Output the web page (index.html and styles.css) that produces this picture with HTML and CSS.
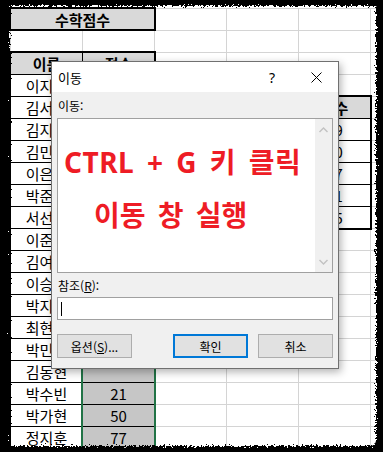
FILE: index.html
```html
<!DOCTYPE html>
<html lang="ko">
<head>
    <meta charset="UTF-8">
    <meta name="viewport" content="width=device-width, initial-scale=1.0">
    <title>이동</title>
    <link rel="stylesheet" href="styles.css">
</head>
<body>
    <div class="sheet">
        <div class="title-cell">수학점수</div>

        <div class="score-table">
            <div class="cell head">이름</div><div class="cell head">점수</div>
            <div class="cell">이지원</div><div class="cell sel"></div>
            <div class="cell">김서연</div><div class="cell sel"></div>
            <div class="cell">김지호</div><div class="cell sel"></div>
            <div class="cell">김민준</div><div class="cell sel"></div>
            <div class="cell">이은서</div><div class="cell sel"></div>
            <div class="cell">박준영</div><div class="cell sel"></div>
            <div class="cell">서선희</div><div class="cell sel"></div>
            <div class="cell">이준호</div><div class="cell sel"></div>
            <div class="cell">김여진</div><div class="cell sel"></div>
            <div class="cell">이승민</div><div class="cell sel"></div>
            <div class="cell">박지민</div><div class="cell sel"></div>
            <div class="cell">최현우</div><div class="cell sel"></div>
            <div class="cell">박민수</div><div class="cell sel"></div>
            <div class="cell">김동현</div><div class="cell sel"></div>
            <div class="cell">박수빈</div><div class="cell sel">21</div>
            <div class="cell">박가현</div><div class="cell sel">50</div>
            <div class="cell">정지훈</div><div class="cell sel">77</div>
        </div>

        <div class="side-table">
            <div class="cell head"></div><div class="cell head">점수</div>
            <div class="cell"></div><div class="cell">89</div>
            <div class="cell"></div><div class="cell">90</div>
            <div class="cell"></div><div class="cell">87</div>
            <div class="cell"></div><div class="cell">71</div>
            <div class="cell"></div><div class="cell">95</div>
        </div>

        <div class="selection"></div>
    </div>

    <div class="dialog">
        <div class="dialog-title">
            <span class="caption">이동</span>
            <span class="help">?</span>
            <span class="close">
                <svg width="11" height="11" viewBox="0 0 11 11">
                    <path d="M0.5 0.5L10.5 10.5M10.5 0.5L0.5 10.5" stroke="#000" stroke-width="1" fill="none"/>
                </svg>
            </span>
        </div>
        <div class="dialog-body">
            <div class="label">이동:</div>
            <div class="listbox">
                <div class="list-area">
                    <p class="line1">CTRL + G 키 클릭</p>
                    <p class="line2">이동 창 실행</p>
                </div>
                <div class="scrollbar">
                    <svg width="9" height="6" viewBox="0 0 9 6">
                        <path d="M0.5 5L4.5 1L8.5 5" stroke="#c2c2c2" stroke-width="1.4" fill="none"/>
                    </svg>
                    <svg width="9" height="6" viewBox="0 0 9 6">
                        <path d="M0.5 1L4.5 5L8.5 1" stroke="#c2c2c2" stroke-width="1.4" fill="none"/>
                    </svg>
                </div>
            </div>
            <div class="label ref-label">참조(<u>R</u>):</div>
            <div class="ref-input"><span class="caret"></span></div>
            <div class="buttons">
                <button class="btn">옵션(<u>S</u>)...</button>
                <div class="btn-group">
                    <button class="btn primary">확인</button>
                    <button class="btn">취소</button>
                </div>
            </div>
        </div>
    </div>

    <svg class="frame" width="383" height="452" viewBox="0 0 383 452">
        <defs>
            <filter id="torn" x="-5%" y="-5%" width="110%" height="110%">
                <feTurbulence type="fractalNoise" baseFrequency="0.55" numOctaves="3" seed="7" result="noise"/>
                <feDisplacementMap in="SourceGraphic" in2="noise" scale="7" xChannelSelector="R" yChannelSelector="G"/>
            </filter>
        </defs>
        <path filter="url(#torn)" fill="#000" fill-rule="evenodd"
              d="M-30 -30H413V482H-30Z M10 6H374Q376 6 376 8V441Q376 446 371 446H10Z"/>
    </svg>
</body>
</html>
```

FILE: styles.css
```css
body {
    margin: 0;
    width: 383px;
    height: 452px;
    overflow: hidden;
    position: relative;
    background: #fff;
    font-family: "Noto Sans CJK KR", "Noto Sans", sans-serif;
    color: #000;
}

/* 엑셀 시트 */
.sheet {
    display: grid;
    grid-template-columns: repeat(6, 72px);
    grid-template-rows: repeat(21, 22px);
    width: max-content;
    margin: 8px 0 0 10px;
    background-image:
        linear-gradient(to right, #d4d4d4 1px, transparent 1px),
        linear-gradient(to bottom, #d4d4d4 1px, transparent 1px);
    background-size: 72px 22px;
    font-size: 15px;
}

.title-cell {
    grid-column: 1 / 3;
    grid-row: 1;
    margin: -1px -2px -1px -1px;
    border: 2px solid #000;
    background: #d9d9d9;
    font-weight: bold;
    display: flex;
    align-items: center;
    justify-content: center;
}

.score-table,
.side-table {
    display: grid;
    grid-template-columns: 71px 71px;
    grid-auto-rows: 21px;
    gap: 1px;
    padding: 2px;
    margin: -1px -2px -2px -1px;
    background: #000;
}

.score-table {
    grid-column: 1 / 3;
    grid-row: 3 / 21;
}

.side-table {
    grid-column: 4 / 6;
    grid-row: 5 / 11;
}

.cell {
    display: flex;
    align-items: center;
    justify-content: center;
    background: #fff;
    line-height: 1;
    white-space: nowrap;
    overflow: hidden;
}

.cell.head {
    background: #d9d9d9;
    font-weight: bold;
}

.cell.sel {
    background: #c6c6c6;
}

/* 선택 영역 테두리 */
.selection {
    grid-column: 2;
    grid-row: 4 / 22;
    margin: -1px -2px 0 -1px;
    border: 2px solid #217346;
    border-bottom: none;
}

/* 이동 대화상자 */
.dialog {
    position: absolute;
    left: 51px;
    top: 61px;
    width: 286px;
    border: 1px solid #707070;
    background: #f0f0f0;
    box-shadow: 2px 3px 8px rgba(0, 0, 0, 0.3);
    font-size: 12px;
    z-index: 1;
}

.dialog-title {
    display: flex;
    align-items: center;
    height: 30px;
    background: #fff;
}

.caption {
    flex: 1;
    padding-left: 6px;
    font-size: 13px;
}

.help {
    width: 44px;
    text-align: center;
    font-size: 14px;
    font-family: "Noto Sans", sans-serif;
}

.close {
    width: 44px;
    display: flex;
    justify-content: center;
}

.dialog-body {
    padding: 6px 5px 10px;
}

.label {
    line-height: 16px;
    padding-left: 1px;
}

.listbox {
    display: flex;
    height: 153px;
    margin-top: 4px;
    border: 1px solid #a0a0a0;
    background: #fff;
}

.list-area {
    flex: 1;
}

.line1,
.line2 {
    margin: 0;
    color: #ee1c25;
    font-family: "Noto Sans", "Noto Sans CJK KR", sans-serif;
    font-weight: bold;
    font-size: 28px;
    line-height: 34px;
    white-space: nowrap;
}

.line1 {
    margin: 26px 0 0 6px;
    letter-spacing: 0.5px;
    word-spacing: 5px;
}

.line2 {
    margin: 19px 0 0 36px;
    word-spacing: 5px;
}

.scrollbar {
    width: 17px;
    background: #f0f0f0;
    display: flex;
    flex-direction: column;
    justify-content: space-between;
    align-items: center;
    padding: 8px 0 7px;
}

.ref-label {
    margin-top: 5px;
}

.ref-input {
    height: 21px;
    margin-top: 3px;
    border: 1px solid #a0a0a0;
    background: #fff;
    display: flex;
    align-items: center;
}

.caret {
    width: 1px;
    height: 14px;
    margin-left: 3px;
    background: #000;
}

.buttons {
    display: flex;
    justify-content: space-between;
    margin-top: 14px;
}

.btn-group {
    display: flex;
    gap: 10px;
}

.btn {
    width: 75px;
    height: 24px;
    padding: 0;
    border: 1px solid #adadad;
    background: #e1e1e1;
    font-family: "Noto Sans CJK KR", sans-serif;
    font-size: 12px;
    color: #000;
}

.btn.primary {
    border: 2px solid #0078d7;
}

/* 찢어진 종이 테두리 */
.frame {
    position: absolute;
    left: 0;
    top: 0;
    z-index: 2;
    pointer-events: none;
}
```
